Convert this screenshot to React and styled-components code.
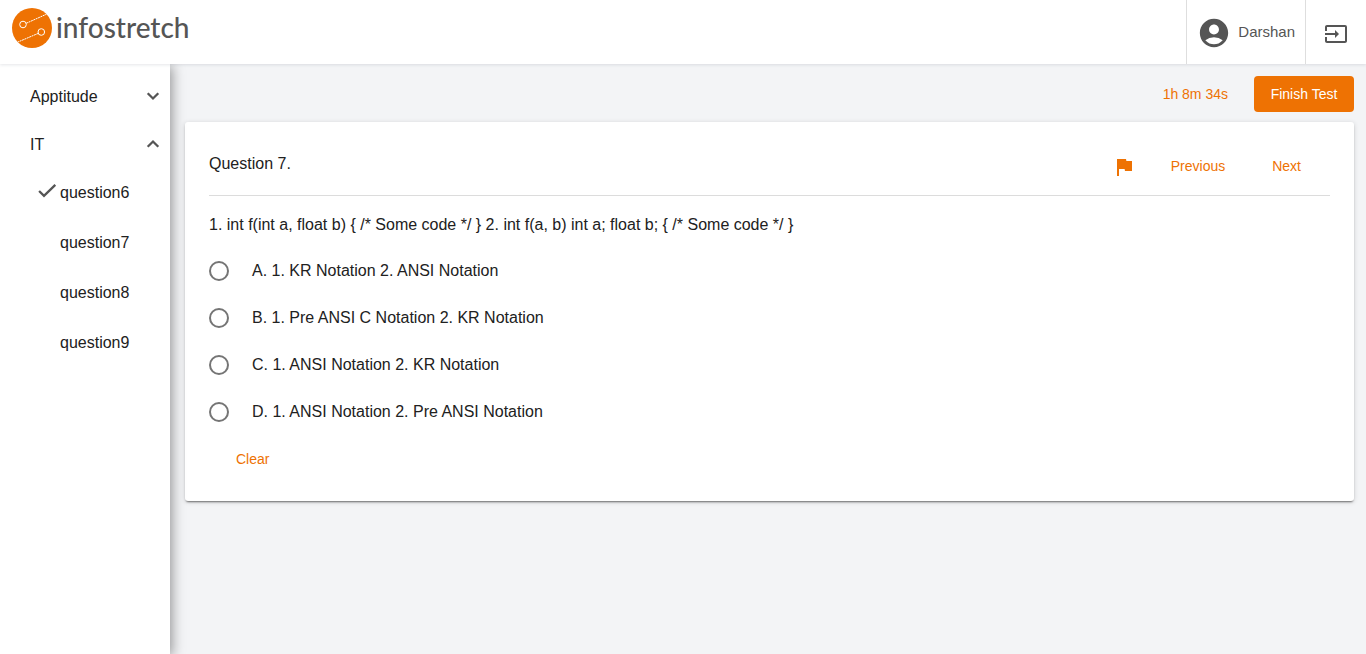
import React, { useState } from 'react';
import styled, { createGlobalStyle } from 'styled-components';
import { MdAccountCircle, MdInput, MdFlag } from 'react-icons/md';

const orange = '#ee7203';
const grey = '#555555';
const ink = '#212121';

const GlobalStyle = createGlobalStyle`
  *, *::before, *::after { box-sizing: border-box; }
  body {
    margin: 0;
    background: #f3f4f6;
    color: ${ink};
    font: 16px/24px "Liberation Sans", Arial, sans-serif;
  }
  button { font: inherit; color: inherit; border: 0; background: none; padding: 0; cursor: pointer; }
  svg { display: block; flex: none; }
`;

const Page = styled.div`
  min-height: 100vh;
  display: flex;
  flex-direction: column;
`;

const Header = styled.header`
  position: relative;
  z-index: 2;
  display: flex;
  height: 64px;
  background: #fff;
  box-shadow: 0 1px 3px rgba(40, 50, 70, 0.12);
`;

const Brand = styled.a`
  display: flex;
  align-items: flex-start;
  gap: 3px;
  padding: 8px 0 0 12px;
  margin-right: auto;
  color: ${grey};
  text-decoration: none;
`;

const BrandName = styled.span`
  font: 500 28px/38px Lato, sans-serif;
`;

const HeaderButton = styled.button`
  display: flex;
  align-items: center;
  gap: 7px;
  padding: ${(p) => (p.$wide ? '2px 10px 0' : '4px 18px 0')};
  border-left: 1px solid #dedede;
  color: ${grey};
`;

const UserName = styled.span`
  padding-bottom: 2px;
  font-size: 15px;
`;

const Body = styled.div`
  flex: 1;
  display: flex;
`;

const Sidebar = styled.nav`
  position: relative;
  z-index: 1;
  width: 170px;
  flex: none;
  padding-top: 8px;
  background: #fff;
  box-shadow: 2px 2px 12px rgba(0, 0, 0, 0.4);
`;

const GroupButton = styled.button`
  display: flex;
  align-items: center;
  justify-content: space-between;
  width: 100%;
  height: 48px;
  padding: 0 5px 0 30px;
`;

const GroupLabel = styled.span`
  padding-top: 2px;
`;

const LineIcon = styled.svg`
  width: 24px;
  height: 24px;
  fill: none;
  stroke: ${grey};
  stroke-width: 2.3px;
`;

const QuestionList = styled.ul`
  list-style: none;
  margin: 0;
  padding: 0;
`;

const QuestionButton = styled.button`
  display: flex;
  align-items: center;
  width: 100%;
  height: 50px;
  padding-left: 35px;
`;

const Mark = styled.span`
  display: flex;
  width: 25px;
  height: 28px;
`;

const Main = styled.main`
  flex: 1;
  min-width: 0;
  padding: 12px 12px 12px 15px;
`;

const Toolbar = styled.div`
  display: flex;
  justify-content: flex-end;
  align-items: center;
  gap: 26px;
  margin-bottom: 10px;
  font-size: 14px;
  color: ${orange};
`;

const FinishButton = styled.button`
  min-width: 100px;
  height: 36px;
  border-radius: 4px;
  background: ${orange};
  color: #fff;
`;

const Card = styled.section`
  padding: 24px;
  border-radius: 3px;
  background: #fff;
  box-shadow: 0 2px 2px -1px rgba(0, 0, 0, 0.5), 0 1px 5px rgba(0, 0, 0, 0.16);
`;

const CardHead = styled.div`
  display: flex;
  align-items: center;
  height: 50px;
  padding-bottom: 10px;
  border-bottom: 1px solid #dcdcdc;
`;

const Title = styled.h1`
  flex: 1;
  margin: 0;
  padding-bottom: 4px;
  font-size: 16px;
  font-weight: 400;
`;

const Actions = styled.div`
  display: flex;
  align-items: center;
  gap: 15px;
  padding-right: 13px;
  color: ${orange};
`;

const LinkButton = styled.button`
  height: 36px;
  padding: 0 16px;
  font-size: 14px;
  color: ${orange};
`;

const FlagButton = styled.button`
  padding-top: 2px;
  margin-right: 4px;
`;

const Prompt = styled.p`
  margin: 17px 0 0;
`;

const Options = styled.div`
  padding-top: 10px;
`;

const Option = styled.label`
  display: flex;
  align-items: center;
  height: 47px;
  gap: 23px;
`;

const Radio = styled.input`
  appearance: none;
  width: 20px;
  height: 20px;
  margin: 0;
  border: 2px solid #757575;
  border-radius: 50%;
  cursor: pointer;

  &:checked {
    border-color: ${orange};
    background: radial-gradient(${orange} 5px, transparent 6px);
  }
`;

const CardFoot = styled.div`
  display: flex;
  padding: 6px 0 0 11px;
`;

function Logo() {
  return (
    <svg width="41" height="40" viewBox="0 0 41 40" aria-hidden="true">
      <circle cx="20" cy="20" r="20" fill={orange} />
      <g fill="none" stroke="#fff" strokeWidth="1">
        <circle cx="11" cy="16.5" r="3.3" />
        <path strokeDasharray="2 0.6" d="M14.2 15.3 34.5 6.2" />
        <circle cx="29.3" cy="24" r="3.3" />
        <path strokeDasharray="2 0.6" d="M26.2 25.4 5.5 34.2" />
      </g>
    </svg>
  );
}

function Chevron({ up }) {
  return (
    <LineIcon viewBox="0 0 24 24" aria-hidden="true">
      <path d={up ? 'M6.7 14.7 12 9.5l5.3 5.2' : 'M6.7 9.3 12 14.5l5.3-5.2'} />
    </LineIcon>
  );
}

function Check() {
  return (
    <LineIcon viewBox="0 0 24 24" aria-hidden="true">
      <path d="M4.1 12 9 16.9 20.3 5.9" />
    </LineIcon>
  );
}

const questions = [
  { name: 'question6', done: true },
  { name: 'question7' },
  { name: 'question8' },
  { name: 'question9' },
];

const options = [
  'A. 1. KR Notation 2. ANSI Notation',
  'B. 1. Pre ANSI C Notation 2. KR Notation',
  'C. 1. ANSI Notation 2. KR Notation',
  'D. 1. ANSI Notation 2. Pre ANSI Notation',
];

export default function App() {
  const [open, setOpen] = useState(true);
  const [answer, setAnswer] = useState(null);

  return (
    <Page>
      <GlobalStyle />
      <Header>
        <Brand href="#">
          <Logo />
          <BrandName>infostretch</BrandName>
        </Brand>
        <HeaderButton $wide>
          <MdAccountCircle size={34} />
          <UserName>Darshan</UserName>
        </HeaderButton>
        <HeaderButton aria-label="Log out">
          <MdInput size={24} />
        </HeaderButton>
      </Header>
      <Body>
        <Sidebar>
          <GroupButton>
            <GroupLabel>Apptitude</GroupLabel>
            <Chevron />
          </GroupButton>
          <GroupButton aria-expanded={open} onClick={() => setOpen(!open)}>
            <GroupLabel>IT</GroupLabel>
            <Chevron up={open} />
          </GroupButton>
          {open && (
            <QuestionList>
              {questions.map((q) => (
                <li key={q.name}>
                  <QuestionButton>
                    <Mark>{q.done && <Check />}</Mark>
                    {q.name}
                  </QuestionButton>
                </li>
              ))}
            </QuestionList>
          )}
        </Sidebar>
        <Main>
          <Toolbar>
            <span>1h 8m 34s</span>
            <FinishButton>Finish Test</FinishButton>
          </Toolbar>
          <Card>
            <CardHead>
              <Title>Question 7.</Title>
              <Actions>
                <FlagButton aria-label="Flag question">
                  <MdFlag size={24} />
                </FlagButton>
                <LinkButton>Previous</LinkButton>
                <LinkButton>Next</LinkButton>
              </Actions>
            </CardHead>
            <Prompt>
              {'1. int f(int a, float b) { /* Some code */ } 2. int f(a, b) int a; float b; { /* Some code */ }'}
            </Prompt>
            <Options role="radiogroup" aria-label="Answers">
              {options.map((text, i) => (
                <Option key={text}>
                  <Radio
                    type="radio"
                    name="answer"
                    checked={answer === i}
                    onChange={() => setAnswer(i)}
                  />
                  {text}
                </Option>
              ))}
            </Options>
            <CardFoot>
              <LinkButton onClick={() => setAnswer(null)}>Clear</LinkButton>
            </CardFoot>
          </Card>
        </Main>
      </Body>
    </Page>
  );
}
